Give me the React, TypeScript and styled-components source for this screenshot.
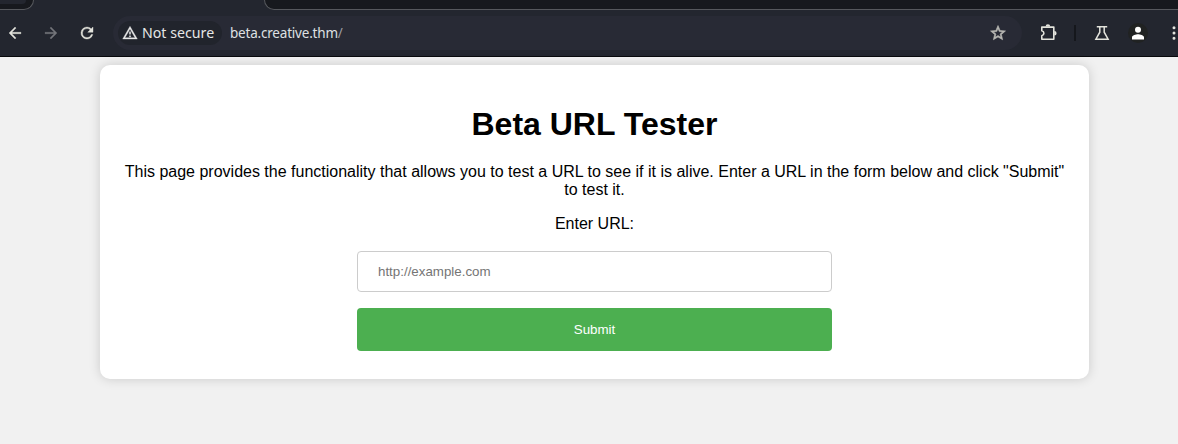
import React from 'react';
import styled, { createGlobalStyle } from 'styled-components';

const GlobalStyle = createGlobalStyle`
  * { box-sizing: border-box; }
  body { margin: 0; background: #f1f1f1; font-family: "Liberation Sans", Arial, sans-serif; overflow: hidden; }
`;

const Window = styled.div`
  height: 444px;
  overflow: hidden;
`;

const TabStrip = styled.div`
  height: 10px;
  display: flex;
  justify-content: space-between;
  background: #23262f;
`;

const InactiveTab = styled.div<{ $side: 'left' | 'right' }>`
  width: ${p => (p.$side === 'left' ? '34px' : '914px')};
  height: 10px;
  background: #17191e;
  border: 0 solid #56585d;
  border-bottom-width: 1px;
  ${p => p.$side === 'left'
    ? 'border-right-width: 1px; border-bottom-right-radius: 10px;'
    : 'border-left-width: 1px; border-bottom-left-radius: 10px;'}
`;

const TabHighlight = styled.div`
  width: 26px;
  height: 4px;
  background: #23262f;
  border-bottom-right-radius: 6px;
`;

const Toolbar = styled.div`
  height: 47px;
  display: flex;
  align-items: center;
  padding: 0 0 1px 6px;
  background: #23262f;
  border-bottom: 1px solid #08090c;
  color: #e3e3dc;
`;

const IconButton = styled.span<{ $gap?: number; $color?: string }>`
  display: flex;
  flex: none;
  margin-right: ${p => p.$gap ?? 0}px;
  color: ${p => p.$color ?? '#e3e3dc'};
`;

const AddressBar = styled.div`
  width: 909px;
  height: 34px;
  flex: none;
  display: flex;
  align-items: center;
  padding: 0 15px 0 5px;
  margin-right: 17px;
  border-radius: 17px;
  background: #282a35;
  font-family: "Noto Sans", sans-serif;
`;

const SecurityChip = styled.div`
  width: 104px;
  height: 24px;
  display: flex;
  align-items: center;
  gap: 4px;
  padding-left: 4px;
  border-radius: 12px;
  background: #21242c;
  color: #e6e6e6;
  font-size: 14.2px;
  line-height: 20px;
  white-space: nowrap;
`;

const Address = styled.div`
  flex: 1;
  margin-left: 8px;
  color: #dfe0e3;
  font-size: 13.5px;
  letter-spacing: -0.2px;
  line-height: 20px;
  span { color: #9a9ca3; }
`;

const Divider = styled.span`
  width: 2px;
  height: 16px;
  flex: none;
  margin-right: 17px;
  background: #15171c;
`;

const Avatar = styled.span`
  width: 20px;
  height: 20px;
  flex: none;
  display: flex;
  align-items: center;
  justify-content: center;
  margin-right: 17px;
  border-radius: 50%;
  background: #202222;
  color: #fff;
`;

const Page = styled.main`
  padding: 8px 89px 0 100px;
`;

const Card = styled.section`
  height: 314px;
  padding: 20px;
  border-radius: 10px;
  background: #fff;
  box-shadow: 0 0 12px rgba(0, 0, 0, 0.16);
  text-align: center;
  color: #000;
`;

const Title = styled.h1`
  margin: 0 0 21px;
  padding-top: 21px;
  font-size: 32px;
  line-height: 36px;
`;

const Description = styled.p`
  margin: 0 0 16px;
  font-size: 16px;
  line-height: 18px;
`;

const Form = styled.form`
  display: flex;
  flex-direction: column;
  align-items: center;
`;

const Label = styled.label`
  font-size: 16px;
  line-height: 18px;
`;

const UrlInput = styled.input`
  width: 475px;
  height: 41px;
  margin: 18px 0 16px;
  padding: 12px 20px;
  border: 1px solid #ccc;
  border-radius: 4px;
  background: #fff;
  font: 13.333px "Liberation Sans", Arial, sans-serif;
  &::placeholder { color: #757575; }
`;

const SubmitButton = styled.button`
  width: 475px;
  height: 43px;
  border: 0;
  border-radius: 4px;
  background: #4caf50;
  color: #fff;
  font: 13.333px "Liberation Sans", Arial, sans-serif;
`;

type GlyphProps = { d: string; size?: number; weight?: number };
const Glyph = ({ d, size = 18, weight = 0 }: GlyphProps) => (
  <svg width={size} height={size} viewBox="0 0 24 24" fill="currentColor" stroke={weight ? 'currentColor' : 'none'} strokeWidth={weight}><path d={d} /></svg>
);

export default function App() {
  return (
    <Window>
      <GlobalStyle />
      <TabStrip>
        <InactiveTab $side="left"><TabHighlight /></InactiveTab>
        <InactiveTab $side="right" />
      </TabStrip>
      <Toolbar>
        <IconButton $gap={18}><Glyph weight={0.4} d="M20 11H7.83l5.59-5.59L12 4l-8 8 8 8 1.41-1.41L7.83 13H20v-2z" /></IconButton>
        <IconButton $gap={18} $color="#73757a"><Glyph weight={0.4} d="M12 4l-1.41 1.41L16.17 11H4v2h12.17l-5.58 5.59L12 20l8-8-8-8z" /></IconButton>
        <IconButton $gap={17}><Glyph weight={0.5} d="M17.65 6.35A7.96 7.96 0 0 0 12 4a8 8 0 1 0 7.73 10h-2.08A6 6 0 1 1 12 6c1.66 0 3.14.69 4.22 1.78L13 11h7V4l-2.35 2.35z" /></IconButton>
        <AddressBar>
          <SecurityChip>
            <Glyph size={16} weight={0.5} d="M12 5.99 19.53 19H4.47L12 5.99M12 2 1 21h22L12 2zm1 14h-2v2h2v-2zm0-6h-2v4h2v-4z" />
            Not secure
          </SecurityChip>
          <Address>beta.creative.thm<span>/</span></Address>
          <IconButton $color="#b8b8b4"><Glyph weight={0.8} d="m22 9.24-7.19-.62L12 2 9.19 8.63 2 9.24l5.46 4.73L5.82 21 12 17.27 18.18 21l-1.63-7.03L22 9.24zM12 15.4l-3.76 2.27 1-4.28-3.32-2.88 4.38-.38L12 6.1l1.71 4.04 4.38.38-3.32 2.88 1 4.28L12 15.4z" /></IconButton>
        </AddressBar>
        <IconButton $gap={17}>
          <svg width="18" height="18" viewBox="0 0 18 18" fill="none" stroke="currentColor" strokeWidth="1.6">
            <path d="M2.8 3.1h12v12.2h-12v-3.6c2.8-.7 2.8-4.2 0-4.9z" strokeLinejoin="round" />
            <path d="M6.6 2.6a2.3 2.3 0 0 1 4.6 0zM15.3 6.9a2.3 2.3 0 0 1 0 4.6z" fill="currentColor" stroke="none" />
          </svg>
        </IconButton>
        <Divider />
        <IconButton $gap={17}>
          <svg width="18" height="18" viewBox="0 0 18 18" fill="none" stroke="currentColor" strokeWidth="1.5">
            <path d="M3.8 2.7h10.4M6.8 3v5.2L2.9 15.2h12.2l-3.9-7V3" />
          </svg>
        </IconButton>
        <Avatar><Glyph d="M12 11.5a4 4 0 1 0 0-8 4 4 0 0 0 0 8zm0 2c-2.67 0-8 1.34-8 4v3h16v-3c0-2.66-5.33-4-8-4z" /></Avatar>
        <IconButton><Glyph d="M12 7a2 2 0 1 0 0-4 2 2 0 0 0 0 4zm0 3a2 2 0 1 0 0 4 2 2 0 0 0 0-4zm0 7a2 2 0 1 0 0 4 2 2 0 0 0 0-4z" /></IconButton>
      </Toolbar>
      <Page>
        <Card>
          <Title>Beta URL Tester</Title>
          <Description>This page provides the functionality that allows you to test a URL to see if it is alive. Enter a URL in the form below and click "Submit" to test it.</Description>
          <Form onSubmit={e => e.preventDefault()}>
            <Label htmlFor="url">Enter URL:</Label>
            <UrlInput id="url" placeholder="http://example.com" />
            <SubmitButton type="submit">Submit</SubmitButton>
          </Form>
        </Card>
      </Page>
    </Window>
  );
}
